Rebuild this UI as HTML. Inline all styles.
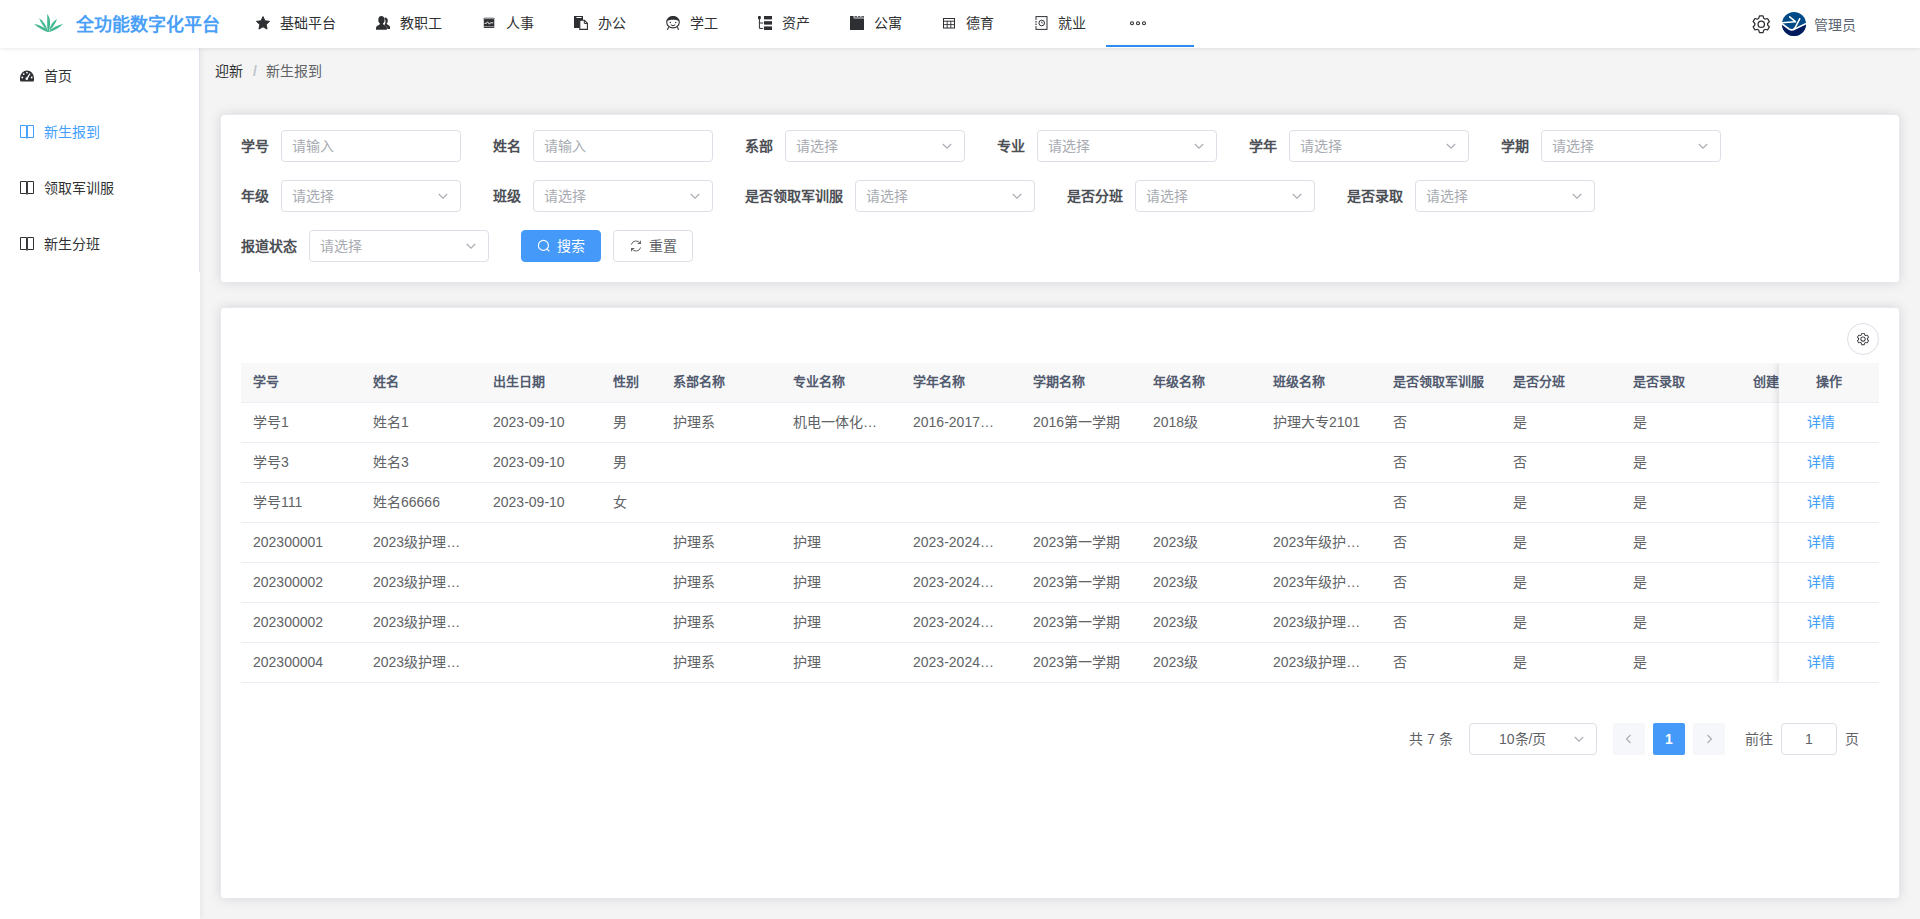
<!DOCTYPE html>
<html lang="zh-CN">
<head>
<meta charset="utf-8">
<title>新生报到</title>
<style>
*{box-sizing:border-box;margin:0;padding:0}
html,body{width:1920px;height:919px;overflow:hidden}
body{font-family:"Liberation Sans",sans-serif;font-size:14px;color:#606266;background:#f4f4f4;position:relative}
svg{display:block}
.abs{position:absolute}
/* header */
#hdr{position:absolute;left:0;top:0;width:1920px;height:48px;background:#fff;box-shadow:0 1px 4px rgba(0,21,41,.09);z-index:10}
#logo{position:absolute;left:34px;top:14px}
#title{position:absolute;left:76px;top:1px;height:48px;line-height:48px;font-size:18px;font-weight:700;color:#4a9ff8;white-space:nowrap}
.nav{position:absolute;top:0;height:48px;line-height:46px;font-size:14px;color:#303133;white-space:nowrap}
.nav svg{position:absolute;top:15px}
.nav span{position:absolute;top:0;left:0}
#uline{position:absolute;left:1106px;top:45px;width:88px;height:2px;background:#2d8cf0}
#uname{position:absolute;left:1814px;top:1px;line-height:48px;color:#5a6472;white-space:nowrap}
/* sidebar */
#side{position:absolute;left:0;top:48px;width:200px;height:871px;background:#fff;box-shadow:1px 0 6px rgba(0,21,41,.07)}
#side .menu{position:absolute;left:0;top:0;width:200px;height:224px;border-right:1px solid #e0e3ea}
.mi{position:absolute;left:0;width:199px;height:56px;line-height:56px;color:#303133;white-space:nowrap}
.mi svg{position:absolute;left:20px;top:21px}
.mi span{position:absolute;left:44px;top:0}
.mi.act{color:#409eff}
/* breadcrumb */
#bc{position:absolute;left:215px;top:62px;line-height:18px;font-size:14px;white-space:nowrap;color:#606266}
#bc b{font-weight:400;color:#303133}
#bc i{font-style:normal;color:#c0c4cc;margin:0 9px 0 10px;font-weight:700}
/* cards */
.card{position:absolute;background:#fff;border:1px solid #e6e9f0;border-radius:4px;box-shadow:0 0 12px rgba(0,0,0,.12)}
#c1{left:220px;top:114px;width:1680px;height:169px}
#c2{left:220px;top:307px;width:1680px;height:592px}
.lbl{position:absolute;height:32px;line-height:32px;font-weight:700;color:#4c4f55;white-space:nowrap}
.inp{position:absolute;width:180px;height:32px;border:1px solid #dcdfe6;border-radius:4px;background:#fff;line-height:30px;padding-left:10px;color:#a8abb2;white-space:nowrap}
.inp svg{position:absolute;right:10px;top:8px}
.btn{position:absolute;height:32px;width:80px;border-radius:4px;line-height:30px;white-space:nowrap}
.btn svg{position:absolute;top:8px}
.btn span{position:absolute;top:0}
/* table */
#thead{position:absolute;left:241px;top:363px;width:1638px;height:40px;background:#f8f8f9;border-bottom:1px solid #ebeef5}
.th{position:absolute;top:363px;height:39px;line-height:38px;font-size:13px;font-weight:700;color:#515a6e;white-space:nowrap}
.row{position:absolute;left:241px;width:1638px;height:40px;border-bottom:1px solid #ebeef5}
.td{position:absolute;height:39px;line-height:39px;white-space:nowrap;color:#606266}
#fixw{position:absolute;left:1759px;top:363px;width:120px;height:320px;overflow:hidden}
#fix{position:absolute;left:20px;top:0;width:100px;height:320px;background:#fff;box-shadow:-1px 0 8px rgba(0,0,0,.14)}
#fix .h{position:absolute;left:0;top:0;width:100px;height:40px;background:#f8f8f9;border-bottom:1px solid #ebeef5;line-height:38px;text-align:center;font-size:13px;font-weight:700;color:#515a6e}
#fix .c{position:absolute;left:0;width:100px;height:40px;border-bottom:1px solid #ebeef5;line-height:39px;color:#409eff}
#fix .c span{position:absolute;left:28px;top:0}
/* pagination */
.pg{position:absolute;top:723px;height:32px;line-height:32px;white-space:nowrap;color:#606266}
</style>
</head>
<body>
<!-- HEADER -->
<div id="hdr">
  <svg id="logo" width="30" height="19" viewBox="0 0 30 19">
    <g fill="#45b892">
      <path d="M13.200 0 C16.600 3.500 16.800 10 15 17.800 L13.600 17.600 C12.800 11 13.400 5.500 13.200 0Z"/>
      <path d="M5 4.200 C9 6.500 12 11 13.400 16.400 L12.200 16 C9.500 12.500 7 8.500 5 4.200Z"/>
      <path d="M23 5 C21.500 9.500 19 13 16 16.200 L15.600 15 C16.800 10.500 19.500 7 23 5Z"/>
      <path d="M0 10 C5.500 10.500 10.500 13.500 14.800 17.200 L14.200 18.200 C9 16.400 4 13.500 0 10Z"/>
      <path d="M29.200 10 C25 13.800 20 16.600 15.400 18 L15 17 C19 13.500 24 10.800 29.200 10Z"/>
    </g>
  </svg>
  <div id="title">全功能数字化平台</div>
  <!-- nav 1 star -->
  <div class="nav" style="left:256px"><svg style="left:0;top:16px" width="14" height="14" viewBox="0 0 14 14"><path fill="#2d2f33" stroke="#2d2f33" stroke-width="1" stroke-linejoin="round" d="M7.00 0.60 L8.94 4.83 L13.56 5.37 L10.14 8.52 L11.06 13.08 L7.00 10.80 L2.94 13.08 L3.86 8.52 L0.44 5.37 L5.06 4.83Z"/></svg><span style="left:24px">基础平台</span></div>
  <!-- nav 2 users -->
  <div class="nav" style="left:376px"><svg style="left:0;top:16px" width="14" height="14" viewBox="0 0 14 14"><g fill="#2d2f33"><path d="M9.2 1.6c1.6 0 2.6 1.3 2.6 3.1 0 1.2-.5 2.3-1.2 2.9.2.9 1.2 1.4 2.3 1.9.8.4 1.1 1 1.1 1.9V13h-2.6c0-1.600-.5-2.500-1.900-3.100-.500-.200-.900-.500-1.100-.800.700-.900 1.100-2.100 1.100-3.400 0-1.500-.400-2.700-1.200-3.500.3-.4.600-.6.900-.6z"/><path d="M5.3 0c2 0 3.300 1.600 3.300 3.900 0 1.600-.700 3-1.700 3.700.1 1 1.200 1.500 2.500 2.100 1 .5 1.500 1.200 1.500 2.300v1.800H0V12c0-1.100.5-1.800 1.500-2.300 1.300-.6 2.400-1.100 2.500-2.100-1-.7-1.700-2.100-1.700-3.700C2.300 1.600 3.500 0 5.300 0z"/></g></svg><span style="left:24px">教职工</span></div>
  <!-- nav 3 monitor -->
  <div class="nav" style="left:482px"><svg style="left:0;top:16px" width="14" height="14" viewBox="0 0 14 14"><rect x="1.800" y="1.700" width="10.500" height="10.300" rx=".6" fill="#2d2f33"/><rect x="2" y="2.300" width="10" height=".8" fill="#bbb"/><rect x="2" y="10.300" width="10" height=".8" fill="#bbb"/><path d="M2.500 7.300 L4.500 7.300 L5.600 5.800 L7.400 8.200 L8.400 6.800 L11.300 6.800" stroke="#fff" stroke-width=".9" fill="none"/></svg><span style="left:24px">人事</span></div>
  <!-- nav 4 docs -->
  <div class="nav" style="left:574px"><svg style="left:0;top:16px" width="14" height="14" viewBox="0 0 14 14"><rect x="0" y="0" width="9" height="12" fill="#2d2f33"/><rect x="2.400" y="1" width="5.200" height="1" fill="#fff"/><path d="M5.800 4.300 H10.500 L13.400 7.200 V13.400 H5.800Z" fill="#fff" stroke="#2d2f33" stroke-width="1.100"/><path d="M10.300 4.500 V7.400 H13.200" fill="none" stroke="#2d2f33" stroke-width="1"/></svg><span style="left:24px">办公</span></div>
  <!-- nav 5 student -->
  <div class="nav" style="left:666px"><svg style="left:0;top:16px" width="14" height="14" viewBox="0 0 14 14"><ellipse cx="7" cy="6.200" rx="6.300" ry="5.700" fill="#fff" stroke="#2d2f33" stroke-width="1.100"/><path d="M.9 5 C1.700 1.600 4.600 .4 7 .4 C9.400 .4 12.300 1.600 13.100 5 C9.500 3.300 4.500 3.300 .9 5Z" fill="#2d2f33"/><circle cx="4.300" cy="6.500" r=".7" fill="#2d2f33"/><circle cx="9.700" cy="6.500" r=".7" fill="#2d2f33"/><path d="M4.800 8.800 Q7 10.800 9.200 8.800" stroke="#2d2f33" stroke-width="1" fill="none"/><path d="M2.600 11.200 L1.400 13.800 M11.400 11.200 L12.600 13.800" stroke="#2d2f33" stroke-width="1.100"/></svg><span style="left:24px">学工</span></div>
  <!-- nav 6 tree -->
  <div class="nav" style="left:758px"><svg style="left:0;top:16px" width="14" height="14" viewBox="0 0 14 14"><g fill="#2d2f33"><rect x="0" y="0" width="2.800" height="3.200" rx=".7"/><rect x="6" y="0" width="8" height="3.400"/><rect x="6" y="5.200" width="8" height="3.400"/><rect x="6" y="10.400" width="8" height="3.600"/></g><path d="M1.400 3 V12.400 H5.200 M1.400 7 H5.200" stroke="#2d2f33" stroke-width="1" fill="none"/></svg><span style="left:24px">资产</span></div>
  <!-- nav 7 apartment -->
  <div class="nav" style="left:850px"><svg style="left:0;top:16px" width="14" height="14" viewBox="0 0 14 14"><rect x="0" y="2.400" width="14" height="11.600" fill="#2d2f33"/><rect x="0" y="0" width="3.600" height="3" fill="#2d2f33"/><rect x="4" y="1" width="10" height="1.600" fill="#8a8c90"/><path d="M4.600 .4 H7 M8 .4 H10.400 M11.400 .4 H14" stroke="#2d2f33" stroke-width=".9"/></svg><span style="left:24px">公寓</span></div>
  <!-- nav 8 grid -->
  <div class="nav" style="left:942px"><svg style="left:0;top:16px" width="14" height="14" viewBox="0 0 14 14"><rect x="1.500" y="2.500" width="11" height="9.500" fill="#fff" stroke="#2d2f33" stroke-width="1"/><path d="M1.500 5.200 H12.500" stroke="#2d2f33" stroke-width="1"/><path d="M1.500 8.600 H12.500 M5.200 5.200 V12 M8.800 5.200 V12" stroke="#2d2f33" stroke-width=".9"/></svg><span style="left:24px">德育</span></div>
  <!-- nav 9 job -->
  <div class="nav" style="left:1034px"><svg style="left:0;top:16px" width="15" height="14" viewBox="0 0 15 14"><rect x="2" y=".6" width="11" height="12.800" rx="0" fill="#fff" stroke="#2d2f33" stroke-width="1"/><path d="M1 4.600 H3 M1 7 H3 M1 9.400 H3" stroke="#fff" stroke-width="1.400"/><path d="M1.200 5.800 H2.800 M1.200 8.200 H2.800" stroke="#2d2f33" stroke-width=".7"/><circle cx="7.700" cy="7" r="2.800" fill="none" stroke="#2d2f33" stroke-width="1"/><path d="M7.700 5.600 V7 H8.900" stroke="#2d2f33" stroke-width=".7" fill="none"/></svg><span style="left:24px">就业</span></div>
  <!-- more -->
  <svg class="abs" style="left:1129px;top:20px" width="18" height="6" viewBox="0 0 18 6"><g fill="#fff" stroke="#2d2f33" stroke-width="1.100"><circle cx="3" cy="3.200" r="1.500"/><circle cx="9" cy="3.200" r="1.500"/><circle cx="15" cy="3.200" r="1.500"/></g></svg>
  <div id="uline"></div>
  <!-- gear -->
  <svg class="abs" style="left:1750.600px;top:13.700px" width="20.500" height="20.500" viewBox="0 0 1024 1024"><path id="gearp" fill="#2d2f33" d="M600.704 64a32 32 0 0 1 30.464 22.208l35.200 109.376c14.784 7.232 28.928 15.360 42.432 24.512l112.384-24.192a32 32 0 0 1 34.432 15.360L944.320 364.800a32 32 0 0 1-4.032 37.504l-77.120 85.120a357.120 357.120 0 0 1 0 49.024l77.120 85.248a32 32 0 0 1 4.032 37.504l-88.704 153.600a32 32 0 0 1-34.432 15.296L708.800 803.904c-13.440 9.088-27.648 17.280-42.368 24.512l-35.264 109.376A32 32 0 0 1 600.704 960H423.296a32 32 0 0 1-30.464-22.208L357.696 828.480a351.616 351.616 0 0 1-42.560-24.640l-112.320 24.256a32 32 0 0 1-34.432-15.360L79.680 659.200a32 32 0 0 1 4.032-37.504l77.120-85.248a357.120 357.120 0 0 1 0-48.896l-77.120-85.248A32 32 0 0 1 79.680 364.800l88.704-153.600a32 32 0 0 1 34.432-15.296l112.320 24.256c13.568-9.152 27.776-17.408 42.560-24.640l35.200-109.312A32 32 0 0 1 423.232 64H600.640zm-23.424 64H446.720l-36.352 113.088-24.512 11.968a294.113 294.113 0 0 0-34.816 20.096l-22.656 15.360-116.224-25.088-65.280 113.152 79.680 88.192-1.920 27.136a293.120 293.120 0 0 0 0 40.192l1.920 27.136-79.808 88.192 65.344 113.152 116.224-25.024 22.656 15.296a294.113 294.113 0 0 0 34.816 20.096l24.512 11.968L446.720 896h130.688l36.480-113.152 24.448-11.904a288.282 288.282 0 0 0 34.752-20.096l22.592-15.296 116.288 25.024 65.280-113.152-79.744-88.192 1.920-27.136a293.120 293.120 0 0 0 0-40.256l-1.920-27.136 79.808-88.128-65.344-113.152-116.288 24.960-22.592-15.232a287.616 287.616 0 0 0-34.752-20.096l-24.448-11.904L577.344 128zM512 320a192 192 0 1 1 0 384 192 192 0 0 1 0-384zm0 64a128 128 0 1 0 0 256 128 128 0 0 0 0-256z"/></svg>
  <!-- avatar -->
  <svg class="abs" style="left:1782px;top:12px" width="24" height="24" viewBox="0 0 24 24"><defs><clipPath id="avc"><circle cx="12" cy="12" r="12"/></clipPath></defs><g clip-path="url(#avc)"><rect width="24" height="24" fill="#004b87"/><path d="M-1 11.400 L7 17.200 Q9.200 18.600 11.800 17.700 L25 11.400 V25 H-1Z" fill="#001a5c"/><g fill="none" stroke="#fff" stroke-linecap="round"><path d="M-1 11.100 L7 17 Q9.200 18.400 11.800 17.500 L25 11.200" stroke-width="1.600"/><path d="M-.5 10.700 L13.300 9.700" stroke-width="1.500"/><path d="M7.700 4.800 L13.400 9.600" stroke-width="1.600"/><path d="M17.700 6.800 L13.300 15.300 Q12.600 16.800 11.200 17.400" stroke-width="1.600"/></g></g></svg>
  <div id="uname">管理员</div>
</div>
<div id="side"><div class="menu">
<div class="mi" style="top:0"><svg style="top:22px" width="14" height="12" viewBox="0 0 14 12"><path d="M0 8 A7 7.500 0 0 1 14 8 V10 Q14 11.500 12.800 11.500 H1.200 Q0 11.500 0 10Z" fill="#2d2f33"/><g fill="#fff"><circle cx="2.300" cy="7.500" r=".9"/><circle cx="3.700" cy="4.100" r=".9"/><circle cx="7" cy="2.600" r=".9"/><circle cx="11.700" cy="7.500" r=".9"/><circle cx="6.800" cy="8.700" r="1.300"/><path d="M6.200 8.300 L9.600 3.200 L10.500 3.700 L7.600 9Z"/></g></svg><span>首页</span></div>
<div class="mi act" style="top:56px"><svg width="14" height="14" viewBox="0 0 14 14"><path d="M.5 .5 H6.550 V12.500 H.5Z M7.450 .5 H13.500 V12.500 H7.450Z" fill="none" stroke="#409eff" stroke-width="1"/><path d="M6.200 12.800 Q7 14 7.800 12.800" fill="none" stroke="#409eff" stroke-width="1"/></svg><span>新生报到</span></div>
<div class="mi" style="top:112px"><svg width="14" height="14" viewBox="0 0 14 14"><path d="M.5 .5 H6.550 V12.500 H.5Z M7.450 .5 H13.500 V12.500 H7.450Z" fill="none" stroke="#2d2f33" stroke-width="1"/><path d="M6.200 12.800 Q7 14 7.800 12.800" fill="none" stroke="#2d2f33" stroke-width="1"/></svg><span>领取军训服</span></div>
<div class="mi" style="top:168px"><svg width="14" height="14" viewBox="0 0 14 14"><path d="M.5 .5 H6.550 V12.500 H.5Z M7.450 .5 H13.500 V12.500 H7.450Z" fill="none" stroke="#2d2f33" stroke-width="1"/><path d="M6.200 12.800 Q7 14 7.800 12.800" fill="none" stroke="#2d2f33" stroke-width="1"/></svg><span>新生分班</span></div>
</div></div>
<div id="bc"><b>迎新</b><i>/</i>新生报到</div>
<div class="card" id="c1"></div>
<div class="lbl" style="left:241px;top:130px">学号</div><div class="inp" style="left:281px;top:130px">请输入</div>
<div class="lbl" style="left:493px;top:130px">姓名</div><div class="inp" style="left:533px;top:130px">请输入</div>
<div class="lbl" style="left:745px;top:130px">系部</div><div class="inp" style="left:785px;top:130px">请选择<svg width="14" height="14" viewBox="0 0 14 14"><path d="M2.800 5 L7 9.200 L11.200 5" fill="none" stroke="#a8abb2" stroke-width="1.100"/></svg></div>
<div class="lbl" style="left:997px;top:130px">专业</div><div class="inp" style="left:1037px;top:130px">请选择<svg width="14" height="14" viewBox="0 0 14 14"><path d="M2.800 5 L7 9.200 L11.200 5" fill="none" stroke="#a8abb2" stroke-width="1.100"/></svg></div>
<div class="lbl" style="left:1249px;top:130px">学年</div><div class="inp" style="left:1289px;top:130px">请选择<svg width="14" height="14" viewBox="0 0 14 14"><path d="M2.800 5 L7 9.200 L11.200 5" fill="none" stroke="#a8abb2" stroke-width="1.100"/></svg></div>
<div class="lbl" style="left:1501px;top:130px">学期</div><div class="inp" style="left:1541px;top:130px">请选择<svg width="14" height="14" viewBox="0 0 14 14"><path d="M2.800 5 L7 9.200 L11.200 5" fill="none" stroke="#a8abb2" stroke-width="1.100"/></svg></div>
<div class="lbl" style="left:241px;top:180px">年级</div><div class="inp" style="left:281px;top:180px">请选择<svg width="14" height="14" viewBox="0 0 14 14"><path d="M2.800 5 L7 9.200 L11.200 5" fill="none" stroke="#a8abb2" stroke-width="1.100"/></svg></div>
<div class="lbl" style="left:493px;top:180px">班级</div><div class="inp" style="left:533px;top:180px">请选择<svg width="14" height="14" viewBox="0 0 14 14"><path d="M2.800 5 L7 9.200 L11.200 5" fill="none" stroke="#a8abb2" stroke-width="1.100"/></svg></div>
<div class="lbl" style="left:745px;top:180px">是否领取军训服</div><div class="inp" style="left:855px;top:180px">请选择<svg width="14" height="14" viewBox="0 0 14 14"><path d="M2.800 5 L7 9.200 L11.200 5" fill="none" stroke="#a8abb2" stroke-width="1.100"/></svg></div>
<div class="lbl" style="left:1067px;top:180px">是否分班</div><div class="inp" style="left:1135px;top:180px">请选择<svg width="14" height="14" viewBox="0 0 14 14"><path d="M2.800 5 L7 9.200 L11.200 5" fill="none" stroke="#a8abb2" stroke-width="1.100"/></svg></div>
<div class="lbl" style="left:1347px;top:180px">是否录取</div><div class="inp" style="left:1415px;top:180px">请选择<svg width="14" height="14" viewBox="0 0 14 14"><path d="M2.800 5 L7 9.200 L11.200 5" fill="none" stroke="#a8abb2" stroke-width="1.100"/></svg></div>
<div class="lbl" style="left:241px;top:230px">报道状态</div><div class="inp" style="left:309px;top:230px">请选择<svg width="14" height="14" viewBox="0 0 14 14"><path d="M2.800 5 L7 9.200 L11.200 5" fill="none" stroke="#a8abb2" stroke-width="1.100"/></svg></div>
<div class="btn" style="left:521px;top:230px;background:#4599f8;border:1px solid #4599f8;color:#fff"><svg style="left:15px" width="14" height="14" viewBox="0 0 14 14"><circle cx="6.400" cy="6.400" r="5" fill="none" stroke="#fff" stroke-width="1.100"/><path d="M10 10 L12.400 12.400" stroke="#fff" stroke-width="1.100"/></svg><span style="left:35px">搜索</span></div>
<div class="btn" style="left:613px;top:230px;background:#fff;border:1px solid #dcdfe6;color:#606266"><svg style="left:15px" width="14" height="14" viewBox="0 0 14 14"><path d="M2.300 5.600 A4.900 4.900 0 0 1 11.200 4.300 M11.700 8.400 A4.900 4.900 0 0 1 2.800 9.700" fill="none" stroke="#606266" stroke-width="1"/><path d="M11.400 1.800 V4.500 H8.700 M2.600 12.200 V9.500 H5.300" fill="none" stroke="#606266" stroke-width="1.100"/></svg><span style="left:35px">重置</span></div>

<div class="card" id="c2"></div>
<div id="thead"></div>
<div class="th" style="left:253px">学号</div><div class="th" style="left:373px">姓名</div><div class="th" style="left:493px">出生日期</div><div class="th" style="left:613px">性别</div><div class="th" style="left:673px">系部名称</div><div class="th" style="left:793px">专业名称</div><div class="th" style="left:913px">学年名称</div><div class="th" style="left:1033px">学期名称</div><div class="th" style="left:1153px">年级名称</div><div class="th" style="left:1273px">班级名称</div><div class="th" style="left:1393px">是否领取军训服</div><div class="th" style="left:1513px">是否分班</div><div class="th" style="left:1633px">是否录取</div><div class="th" style="left:1753px">创建</div>
<div class="row" style="top:403px"></div><div class="td" style="left:253px;top:403px">学号1</div><div class="td" style="left:373px;top:403px">姓名1</div><div class="td" style="left:493px;top:403px">2023-09-10</div><div class="td" style="left:613px;top:403px">男</div><div class="td" style="left:673px;top:403px">护理系</div><div class="td" style="left:793px;top:403px">机电一体化…</div><div class="td" style="left:913px;top:403px">2016-2017…</div><div class="td" style="left:1033px;top:403px">2016第一学期</div><div class="td" style="left:1153px;top:403px">2018级</div><div class="td" style="left:1273px;top:403px">护理大专2101</div><div class="td" style="left:1393px;top:403px">否</div><div class="td" style="left:1513px;top:403px">是</div><div class="td" style="left:1633px;top:403px">是</div>
<div class="row" style="top:443px"></div><div class="td" style="left:253px;top:443px">学号3</div><div class="td" style="left:373px;top:443px">姓名3</div><div class="td" style="left:493px;top:443px">2023-09-10</div><div class="td" style="left:613px;top:443px">男</div><div class="td" style="left:1393px;top:443px">否</div><div class="td" style="left:1513px;top:443px">否</div><div class="td" style="left:1633px;top:443px">是</div>
<div class="row" style="top:483px"></div><div class="td" style="left:253px;top:483px">学号111</div><div class="td" style="left:373px;top:483px">姓名66666</div><div class="td" style="left:493px;top:483px">2023-09-10</div><div class="td" style="left:613px;top:483px">女</div><div class="td" style="left:1393px;top:483px">否</div><div class="td" style="left:1513px;top:483px">是</div><div class="td" style="left:1633px;top:483px">是</div>
<div class="row" style="top:523px"></div><div class="td" style="left:253px;top:523px">202300001</div><div class="td" style="left:373px;top:523px">2023级护理…</div><div class="td" style="left:673px;top:523px">护理系</div><div class="td" style="left:793px;top:523px">护理</div><div class="td" style="left:913px;top:523px">2023-2024…</div><div class="td" style="left:1033px;top:523px">2023第一学期</div><div class="td" style="left:1153px;top:523px">2023级</div><div class="td" style="left:1273px;top:523px">2023年级护…</div><div class="td" style="left:1393px;top:523px">否</div><div class="td" style="left:1513px;top:523px">是</div><div class="td" style="left:1633px;top:523px">是</div>
<div class="row" style="top:563px"></div><div class="td" style="left:253px;top:563px">202300002</div><div class="td" style="left:373px;top:563px">2023级护理…</div><div class="td" style="left:673px;top:563px">护理系</div><div class="td" style="left:793px;top:563px">护理</div><div class="td" style="left:913px;top:563px">2023-2024…</div><div class="td" style="left:1033px;top:563px">2023第一学期</div><div class="td" style="left:1153px;top:563px">2023级</div><div class="td" style="left:1273px;top:563px">2023年级护…</div><div class="td" style="left:1393px;top:563px">否</div><div class="td" style="left:1513px;top:563px">是</div><div class="td" style="left:1633px;top:563px">是</div>
<div class="row" style="top:603px"></div><div class="td" style="left:253px;top:603px">202300002</div><div class="td" style="left:373px;top:603px">2023级护理…</div><div class="td" style="left:673px;top:603px">护理系</div><div class="td" style="left:793px;top:603px">护理</div><div class="td" style="left:913px;top:603px">2023-2024…</div><div class="td" style="left:1033px;top:603px">2023第一学期</div><div class="td" style="left:1153px;top:603px">2023级</div><div class="td" style="left:1273px;top:603px">2023级护理…</div><div class="td" style="left:1393px;top:603px">否</div><div class="td" style="left:1513px;top:603px">是</div><div class="td" style="left:1633px;top:603px">是</div>
<div class="row" style="top:643px"></div><div class="td" style="left:253px;top:643px">202300004</div><div class="td" style="left:373px;top:643px">2023级护理…</div><div class="td" style="left:673px;top:643px">护理系</div><div class="td" style="left:793px;top:643px">护理</div><div class="td" style="left:913px;top:643px">2023-2024…</div><div class="td" style="left:1033px;top:643px">2023第一学期</div><div class="td" style="left:1153px;top:643px">2023级</div><div class="td" style="left:1273px;top:643px">2023级护理…</div><div class="td" style="left:1393px;top:643px">否</div><div class="td" style="left:1513px;top:643px">是</div><div class="td" style="left:1633px;top:643px">是</div>
<div id="fixw"><div id="fix"><div class="h">操作</div><div class="c" style="top:40px"><span>详情</span></div><div class="c" style="top:80px"><span>详情</span></div><div class="c" style="top:120px"><span>详情</span></div><div class="c" style="top:160px"><span>详情</span></div><div class="c" style="top:200px"><span>详情</span></div><div class="c" style="top:240px"><span>详情</span></div><div class="c" style="top:280px"><span>详情</span></div></div></div>
<div class="abs" style="left:1847px;top:323px;width:32px;height:32px;border:1px solid #dcdfe6;border-radius:50%;background:#fff"><svg class="abs" style="left:8px;top:8px" width="14" height="14" viewBox="0 0 1024 1024"><use href="#gearp"/></svg></div>
<div class="pg" style="left:1409px">共 7 条</div>
<div class="pg" style="left:1469px;width:128px;border:1px solid #dcdfe6;border-radius:4px;line-height:30px;background:#fff"><span class="abs" style="left:29px;top:0">10条/页</span><svg class="abs" style="right:10px;top:8px" width="14" height="14" viewBox="0 0 14 14"><path d="M2.800 5 L7 9.200 L11.200 5" fill="none" stroke="#a8abb2" stroke-width="1.100"/></svg></div>
<div class="pg" style="left:1613px;width:32px;background:#f5f7fa;border-radius:2px"><svg class="abs" style="left:10px;top:10px" width="12" height="12" viewBox="0 0 12 12"><path d="M7.500 2 L3.500 6 L7.500 10" fill="none" stroke="#a8abb2" stroke-width="1.100"/></svg></div>
<div class="pg" style="left:1653px;width:32px;background:#4599f8;border-radius:2px;color:#fff;font-weight:700;text-align:center">1</div>
<div class="pg" style="left:1693px;width:32px;background:#f5f7fa;border-radius:2px"><svg class="abs" style="left:10px;top:10px" width="12" height="12" viewBox="0 0 12 12"><path d="M4.500 2 L8.500 6 L4.500 10" fill="none" stroke="#a8abb2" stroke-width="1.100"/></svg></div>
<div class="pg" style="left:1745px">前往</div>
<div class="pg" style="left:1781px;width:56px;border:1px solid #dcdfe6;border-radius:4px;line-height:30px;background:#fff;text-align:center">1</div>
<div class="pg" style="left:1845px">页</div>

</body>
</html>
